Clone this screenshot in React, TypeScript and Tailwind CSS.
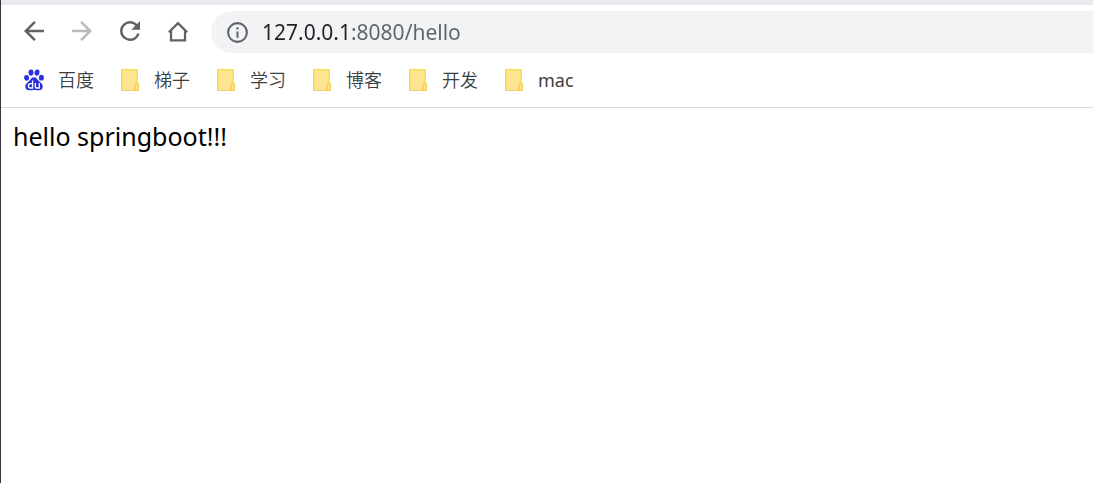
import { useState, type ReactNode } from "react";

const folders = ["梯子", "学习", "博客", "开发", "mac"];

function NavButton({ label, disabled, children }: { label: string; disabled?: boolean; children: ReactNode }) {
  return (
    <button
      type="button"
      aria-label={label}
      disabled={disabled}
      className="flex size-12 shrink-0 items-center justify-center rounded-full text-[#5f6368] disabled:text-[#bababc]"
    >
      <svg viewBox="0 0 24 24" className="size-[30px]" fill="currentColor" aria-hidden="true">
        {children}
      </svg>
    </button>
  );
}

function BaiduIcon() {
  return (
    <svg viewBox="0 0 20 22" className="h-[22px] w-5 shrink-0" aria-hidden="true">
      <g fill="#2932e1">
        <ellipse cx="2.6" cy="8.900" rx="2.500" ry="2.900" transform="rotate(-10 2.6 8.9)" />
        <ellipse cx="7" cy="3.600" rx="2.500" ry="3.100" />
        <ellipse cx="13" cy="3.600" rx="2.500" ry="3.100" transform="rotate(8 13 3.6)" />
        <ellipse cx="17.400" cy="8.700" rx="2.500" ry="2.900" />
        <path d="M10 8.200c-2 0-2.900 1.300-3.900 2.700C4.900 12.500 1.200 14.200 1.200 17.500c0 2.200 1.600 3.800 3.700 3.800 1.800 0 3.200-.4 5.100-.4s3.300.4 5.100.4c2.200 0 3.700-1.600 3.700-3.800 0-3.300-3.600-5-4.900-6.600C12.900 9.500 12 8.200 10 8.200z" />
      </g>
      <g fill="none" stroke="#fff" strokeWidth="1.3">
        <path d="M8.600 11.500V19H6.300c-1.100 0-1.900-.8-1.900-2.200s.8-2.200 1.900-2.200h2.300" />
        <path d="M11.300 14v3.400c0 1.100.4 1.600 1.400 1.600h2.600v-5" />
      </g>
    </svg>
  );
}

function FolderIcon() {
  return (
    <svg viewBox="0 0 20 22" className="h-[22px] w-5 shrink-0" aria-hidden="true">
      <path d="M1 1q0-1 1-1h15q1 0 1 1v13l1 1v6q0 1-1 1H2q-1 0-1-1z" fill="#ffe591" />
      <path d="M1.800 21V.8h15.400V14" fill="none" stroke="#fddb5c" strokeWidth="1.500" />
      <path d="M1.500 1v20.400H15" fill="none" stroke="#f3d060" />
      <path d="M15.200 21.300v-5.500q0-1.500 1.500-1.500t1.600 1.500v4q0 1.500-1.500 1.500z" fill="#ffe591" stroke="#f2cc52" strokeWidth="1.300" />
    </svg>
  );
}

export default function App() {
  const [url, setUrl] = useState("127.0.0.1:8080/hello");
  return (
    <div className="flex min-h-screen flex-col border-l border-[#35363f] bg-white font-['Noto_Sans','Noto_Sans_CJK_SC',sans-serif]">
      <header className="border-b border-[#dadce0]">
        <div className="h-[5px] bg-[#e8eaed]" />
        <div className="flex items-center pt-[6px] pl-[9px]">
          <nav aria-label="Navigation" className="-my-1 flex pb-[2px]">
            <NavButton label="Back">
              <path d="M20 11H7.830l5.590-5.590L12 4l-8 8 8 8 1.410-1.410L7.830 13H20v-2z" />
            </NavButton>
            <NavButton label="Forward" disabled>
              <path d="M12 4l-1.410 1.410L16.170 11H4v2h12.170l-5.580 5.590L12 20l8-8-8-8z" />
            </NavButton>
            <NavButton label="Reload">
              <path d="M17.650 6.350A7.958 7.958 0 0 0 12 4a8 8 0 1 0 7.730 10h-2.080A5.990 5.990 0 0 1 12 18a6 6 0 1 1 0-12c1.660 0 3.140.69 4.220 1.780L13 11h7V4l-2.350 2.350z" />
            </NavButton>
            <NavButton label="Home">
              <path d="M6.400 11.500v7.900h11.200v-7.900" fill="none" stroke="currentColor" strokeWidth="1.800" />
              <path d="M4.700 13 12 5.700l7.300 7.300" fill="none" stroke="currentColor" strokeWidth="1.900" />
            </NavButton>
          </nav>
          <div className="ml-[9px] flex h-[42px] min-w-0 grow items-center gap-3 rounded-l-full bg-[#f1f3f4] pl-[14px]">
            <button type="button" aria-label="View site information" className="shrink-0 text-[#5f6368]">
              <svg viewBox="0 0 24 24" className="size-[25px]" fill="currentColor" aria-hidden="true">
                <path d="M11 17h2v-6h-2v6zm1-15a10 10 0 1 0 0 20 10 10 0 0 0 0-20zm0 18a8 8 0 1 1 0-16 8 8 0 0 1 0 16zM11 9h2V7h-2v2z" />
              </svg>
            </button>
            <input
              aria-label="Address"
              value={url}
              onChange={(e) => setUrl(e.target.value)}
              spellCheck={false}
              className="h-full min-w-0 grow bg-[linear-gradient(to_right,#202124_89px,#5f6368_89px)] bg-clip-text text-[21px] text-transparent caret-black outline-none"
            />
          </div>
        </div>
        <nav aria-label="Bookmarks" className="flex h-[54px] items-center gap-[26px] pl-[23px] text-lg font-[350] text-[#3c4043]">
          <a href="#baidu" className="flex items-center gap-[14px] whitespace-nowrap">
            <BaiduIcon />
            百度
          </a>
          {folders.map((name) => (
            <a key={name} href={`#${name}`} className="flex items-center gap-[14px] whitespace-nowrap last:font-normal">
              <FolderIcon />
              {name}
            </a>
          ))}
        </nav>
      </header>
      <main className="px-3 pt-[10px] text-[25px] leading-9 text-black">hello springboot!!!</main>
    </div>
  );
}
